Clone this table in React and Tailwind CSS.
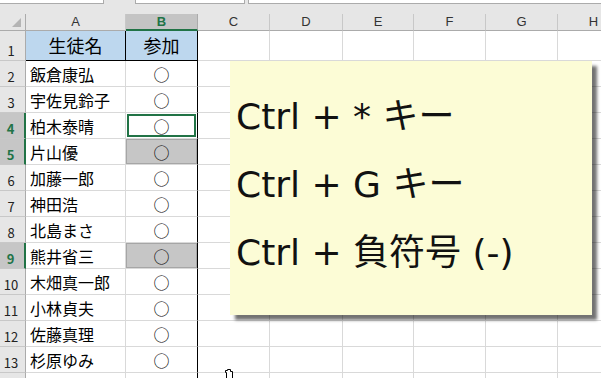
import React from 'react';

const names = [
    '飯倉康弘', '宇佐見鈴子', '柏木泰晴', '片山優', '加藤一郎', '神田浩',
    '北島まさ', '熊井省三', '木畑真一郎', '小林貞夫', '佐藤真理', '杉原ゆみ'
];
// rows whose header is highlighted (multi selection)
const picked = [4, 5, 9];

const restCols = [
    { key: 'C', w: 'w-[72px]' },
    { key: 'D', w: 'w-[73px]' },
    { key: 'E', w: 'w-[71px]' },
    { key: 'F', w: 'w-[72px]' },
    { key: 'G', w: 'w-[72px]' },
    { key: 'H', w: 'w-[72px]' },
];

const RowHead = ({ n, h, label = true }) => {
    const on = picked.includes(n);
    return (
        <div className={`${h} w-[26px] shrink-0 flex items-end justify-center pr-[3px] pb-[1px] text-[13px] leading-none border-b border-[#c8c8c8] ${on ? 'bg-[#c6c6c6] text-[#217346] font-bold border-r-2 border-r-[#217346]' : 'bg-[#e6e6e6] text-[#222] border-r border-r-[#ababab]'}`}>
            {label && <span className="pb-[2px]">{n}</span>}
        </div>
    );
};

const EmptyCells = () => (
    <>
        {restCols.map((c) => (
            <div key={c.key} className={`${c.w} shrink-0 border-r border-b border-[#d9d9d9]`}></div>
        ))}
    </>
);

const Cursor = () => (
    <svg className="absolute left-[222px] top-[369px]" width="14" height="10" viewBox="0 0 14 10">
        <path d="M4.5 9.5 V3.5 H3.5 V1.5 H5.5 V0.5 H8.5 V2.5 H10.5 V9.5" fill="#fff" stroke="#000" strokeWidth="1" />
    </svg>
);

const App = () => {
    return (
        <div className="relative w-[601px] h-[378px] overflow-hidden bg-white font-['Noto_Sans_CJK_JP','Liberation_Sans',sans-serif] text-black">
            {/* formula bar remains */}
            <div className="h-[14px] bg-[#e6e6e6] flex items-start">
                <div className="w-[104px] h-[4px] bg-white border-b border-r border-[#ababab]"></div>
                <div className="w-[31px]"></div>
                <div className="w-[110px] h-[4px] bg-white border-b border-x border-[#ababab]"></div>
                <div className="w-[3px]"></div>
                <div className="flex-1 h-[4px] bg-white border-b border-l border-[#ababab]"></div>
            </div>

            {/* column header */}
            <div className="flex h-[17px] bg-[#e6e6e6] font-['Liberation_Sans',sans-serif] text-[13px] text-[#333]">
                <div className="w-[26px] shrink-0 border-r border-b border-[#ababab] flex items-end justify-end pr-[4px] pb-[3px]">
                    <svg width="9" height="9" viewBox="0 0 9 9">
                        <polygon points="9,0 9,9 0,9" fill="#b4b4b4" />
                    </svg>
                </div>
                <div className="w-[100px] shrink-0 border-r border-b border-[#c8c8c8] border-b-[#ababab] flex items-center justify-center">A</div>
                <div className="w-[72px] shrink-0 bg-[#c4c4c4] border-r border-[#ababab] border-b-2 border-b-[#217346] flex items-center justify-center text-[#217346] font-bold">B</div>
                {restCols.map((c) => (
                    <div key={c.key} className={`${c.w} shrink-0 border-r border-b border-[#c8c8c8] border-b-[#ababab] flex items-center justify-center`}>{c.key}</div>
                ))}
            </div>

            {/* row 1 */}
            <div className="flex h-[30px]">
                <RowHead n={1} h="h-[30px]" />
                <div className="w-[100px] shrink-0 bg-[#bdd7ee] border-r border-b border-black flex items-center justify-center text-[18px]">生徒名</div>
                <div className="w-[72px] shrink-0 bg-[#bdd7ee] border-r border-b border-black flex items-center justify-center text-[18px]">参加</div>
                <EmptyCells />
            </div>

            {names.map((name, i) => {
                const n = i + 2;
                return (
                    <div key={n} className="flex h-[26px]">
                        <RowHead n={n} h="h-[26px]" />
                        <div className="w-[100px] shrink-0 border-r border-b border-[#d9d9d9] flex items-center pl-[4px] text-[16px]">{name}</div>
                        <div className="w-[72px] shrink-0 border-r border-r-black border-b border-b-[#d9d9d9] p-[1px]">
                            {n === 4 ? (
                                <div className="h-full border-2 border-[#217346] flex items-center justify-center text-[16px]">○</div>
                            ) : n === 5 || n === 9 ? (
                                <div className="h-full bg-[#c6c6c6] ring-1 ring-[#a6a6a6] flex items-center justify-center text-[16px]">○</div>
                            ) : (
                                <div className="h-full flex items-center justify-center text-[16px]">○</div>
                            )}
                        </div>
                        <EmptyCells />
                    </div>
                );
            })}

            {/* row 14, cut off by the window */}
            <div className="flex h-[26px]">
                <RowHead n={14} h="h-[26px]" label={false} />
                <div className="w-[100px] shrink-0 border-r border-b border-[#d9d9d9]"></div>
                <div className="w-[72px] shrink-0 border-r border-r-black border-b border-b-[#d9d9d9]"></div>
                <EmptyCells />
            </div>

            {/* note shape */}
            <div className="absolute left-[230px] top-[61px] w-[362px] h-[254px] bg-[#fcfcd6] shadow-[5px_5px_3px_rgba(0,0,0,0.55)] pl-[6px] pt-[22px] flex flex-col text-[36px] leading-[68px] text-[#111] font-['DejaVu_Sans','Noto_Sans_CJK_JP',sans-serif]">
                <div>Ctrl + * キー</div>
                <div>Ctrl + G キー</div>
                <div>Ctrl + 負符号 (-)</div>
            </div>

            <Cursor />
        </div>
    );
};

export default App;
